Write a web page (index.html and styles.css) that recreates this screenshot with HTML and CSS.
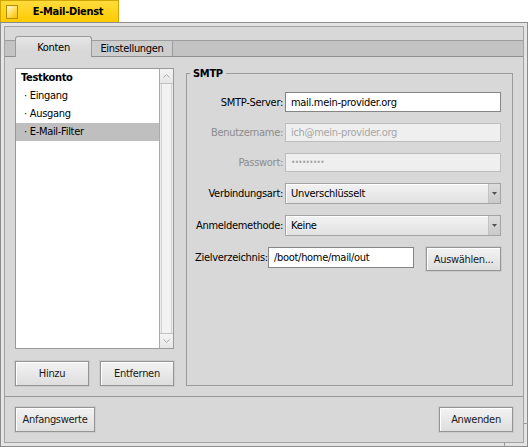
FILE: index.html
```html
<!DOCTYPE html>
<html lang="de">
<head>
    <meta charset="UTF-8">
    <meta name="viewport" content="width=device-width, initial-scale=1.0">
    <title>E-Mail-Dienst</title>
    <link rel="stylesheet" href="styles.css">
</head>
<body>
    <div class="title-tab">
        <span class="close-box"></span>
        <span class="title">E-Mail-Dienst</span>
    </div>

    <div class="window">
        <div class="window-inner">
            <div class="tab-bar">
                <div class="tab active">Konten</div>
                <div class="tab">Einstellungen</div>
            </div>

            <div class="tab-panel">
                <div class="accounts">
                    <div class="list-box">
                        <ul class="account-list">
                            <li class="account">Testkonto</li>
                            <li class="sub-item">· Eingang</li>
                            <li class="sub-item">· Ausgang</li>
                            <li class="sub-item selected">· E-Mail-Filter</li>
                        </ul>
                        <div class="scrollbar">
                            <div class="scroll-arrow up">
                                <svg width="7" height="4" viewBox="0 0 7 4"><polyline points="0.5,3.5 3.5,0.5 6.5,3.5" fill="none" stroke="#a9a9a9" stroke-width="1"/></svg>
                            </div>
                            <div class="scroll-track"></div>
                            <div class="scroll-arrow down">
                                <svg width="7" height="4" viewBox="0 0 7 4"><polyline points="0.5,0.5 3.5,3.5 6.5,0.5" fill="none" stroke="#a9a9a9" stroke-width="1"/></svg>
                            </div>
                        </div>
                    </div>
                    <div class="list-buttons">
                        <button class="btn">Hinzu</button>
                        <button class="btn">Entfernen</button>
                    </div>
                </div>

                <fieldset class="group">
                    <legend>SMTP</legend>
                    <div class="form-grid">
                        <label class="field-label">SMTP-Server:</label>
                        <input class="text-field" type="text" value="mail.mein-provider.org">

                        <label class="field-label disabled">Benutzername:</label>
                        <input class="text-field" type="text" value="ich@mein-provider.org" disabled>

                        <label class="field-label disabled">Passwort:</label>
                        <input class="text-field password" type="text" value="•••••••••" disabled>

                        <label class="field-label">Verbindungsart:</label>
                        <div class="menu-field">
                            <span class="menu-value">Unverschlüsselt</span>
                            <span class="menu-arrow">
                                <svg width="5" height="3" viewBox="0 0 5 3"><polygon points="0,0 5,0 2.5,3" fill="#505050"/></svg>
                            </span>
                        </div>

                        <label class="field-label">Anmeldemethode:</label>
                        <div class="menu-field">
                            <span class="menu-value">Keine</span>
                            <span class="menu-arrow">
                                <svg width="5" height="3" viewBox="0 0 5 3"><polygon points="0,0 5,0 2.5,3" fill="#505050"/></svg>
                            </span>
                        </div>
                    </div>

                    <div class="dir-row">
                        <label class="dir-label">Zielverzeichnis:</label>
                        <input class="text-field dir-field" type="text" value="/boot/home/mail/out">
                        <button class="btn choose">Auswählen...</button>
                    </div>
                </fieldset>
            </div>

            <div class="footer">
                <button class="btn defaults">Anfangswerte</button>
                <button class="btn apply">Anwenden</button>
            </div>
        </div>

        <span class="resize-tick tick-right"></span>
        <span class="resize-tick tick-bottom"></span>
    </div>
</body>
</html>
```

FILE: styles.css
```css
* {
    margin: 0;
    padding: 0;
    box-sizing: border-box;
}

body {
    width: 528px;
    height: 447px;
    overflow: hidden;
    background-color: #ffffff;
    font-family: "DejaVu Sans Condensed", "Liberation Sans", sans-serif;
    font-size: 11px;
    letter-spacing: -0.3px;
    color: #000;
}

/* window title tab */
.title-tab {
    width: 119px;
    height: 22px;
    display: flex;
    align-items: center;
    background: linear-gradient(#ffdc3c, #ffcb00);
    border: 1px solid #d2a600;
    border-bottom: none;
}

.close-box {
    width: 12px;
    height: 14px;
    margin-left: 5px;
    border: 1px solid #b38e00;
    background: linear-gradient(135deg, #fff9dc, #ffd84a 60%, #f2bf00);
}

.title {
    flex: 1;
    text-align: center;
    font-weight: bold;
}

/* window frame */
.window {
    position: relative;
    width: 528px;
    height: 425px;
    border: 1px solid #8c8c8c;
    background-color: #e4e4e4;
    padding: 3px;
}

.window-inner {
    height: 100%;
    display: flex;
    flex-direction: column;
    border: 1px solid #a2a2a2;
    background-color: #d8d8d8;
}

.resize-tick {
    position: absolute;
    background-color: #9a9a9a;
}

.tick-right {
    right: -1px;
    bottom: 22px;
    width: 5px;
    height: 1px;
}

.tick-bottom {
    right: 22px;
    bottom: -1px;
    width: 1px;
    height: 5px;
}

/* tabs */
.tab-bar {
    margin-top: 13px;
    height: 17px;
    display: flex;
    align-items: flex-end;
    padding-left: 10px;
    background-color: #c3c3c3;
    border-top: 1px solid #9c9c9c;
    border-bottom: 1px solid #8f8f8f;
}

.tab {
    height: 15px;
    width: 81px;
    display: flex;
    align-items: center;
    justify-content: center;
    background-color: #cdcdcd;
    border-right: 1px solid #9c9c9c;
}

.tab.active {
    width: 77px;
    height: 21px;
    margin-bottom: -1px;
    background: linear-gradient(#e6e6e6, #d8d8d8 70%);
    border: 1px solid #9a9a9a;
    border-bottom: none;
    border-radius: 3px 3px 0 0;
}

.tab-panel {
    flex: 1;
    display: flex;
    gap: 12px;
    padding: 11px 10px 10px 10px;
    border-bottom: 1px solid #989898;
}

/* account list */
.accounts {
    width: 159px;
    display: flex;
    flex-direction: column;
}

.list-box {
    flex: 1;
    display: flex;
    border: 1px solid #9a9a9a;
    background-color: #ffffff;
}

.account-list {
    flex: 1;
    list-style: none;
}

.account-list li {
    height: 18px;
    line-height: 18px;
    padding-left: 5px;
}

.account-list .account {
    font-weight: bold;
}

.account-list .sub-item {
    padding-left: 8px;
}

.account-list .selected {
    background-color: #bfbfbf;
}

.scrollbar {
    width: 14px;
    display: flex;
    flex-direction: column;
    border-left: 1px solid #ababab;
    background-color: #ececec;
}

.scroll-arrow {
    height: 15px;
    display: flex;
    align-items: center;
    justify-content: center;
    background: linear-gradient(#f4f4f4, #e6e6e6);
}

.scroll-arrow.up {
    border-bottom: 1px solid #c2c2c2;
}

.scroll-arrow.down {
    border-top: 1px solid #c2c2c2;
}

.scroll-track {
    flex: 1;
    margin: 0 1px;
    border-left: 1px solid #d4d4d4;
    border-right: 1px solid #d4d4d4;
    background-color: #f2f2f2;
}

.list-buttons {
    display: flex;
    justify-content: space-between;
    margin-top: 12px;
}

/* buttons */
.btn {
    height: 25px;
    width: 74px;
    font: inherit;
    letter-spacing: inherit;
    color: #1a1a1a;
    border: 1px solid #959595;
    background: linear-gradient(#f3f3f3, #dedede);
    box-shadow: inset 1px 1px #ffffff, 0 0 0 1px #cbcbcb;
}

/* SMTP group */
.group {
    flex: 1;
    min-width: 0;
    border: 1px solid #9b9b9b;
    padding: 13px 11px 10px 8px;
}

.group legend {
    margin-left: -5px;
    padding: 0 3px;
    line-height: 11px;
    font-weight: bold;
}

.form-grid {
    display: grid;
    grid-template-columns: 90px 216px;
    grid-template-rows: 20px 19px 19px 21px 21px;
    row-gap: 11px;
    align-items: stretch;
}

.field-label {
    align-self: center;
    text-align: right;
    padding-right: 2px;
    white-space: nowrap;
}

.field-label.disabled {
    color: #8c8c8c;
}

.text-field {
    width: 100%;
    height: 100%;
    padding: 0 5px;
    font: inherit;
    letter-spacing: inherit;
    color: #000;
    background-color: #ffffff;
    border: 1px solid #858585;
    outline: none;
}

.text-field:disabled {
    color: #a6a6a6;
    background-color: #efefef;
    border-color: #bdbdbd;
}

.text-field.password {
    font-size: 8px;
    letter-spacing: -0.6px;
}

.menu-field {
    display: flex;
    border: 1px solid #a3a3a3;
    background: linear-gradient(#f2f2f2, #e2e2e2);
    box-shadow: inset 1px 1px #ffffff;
}

.menu-value {
    flex: 1;
    display: flex;
    align-items: center;
    padding-left: 5px;
}

.menu-arrow {
    width: 12px;
    display: flex;
    align-items: center;
    justify-content: center;
    border-left: 1px solid #c4c4c4;
    background: linear-gradient(#dcdcdc, #cacaca);
}

.dir-row {
    display: flex;
    align-items: flex-start;
    margin-top: 11px;
}

.dir-label {
    width: 73px;
    line-height: 21px;
    white-space: nowrap;
}

.dir-field {
    width: 146px;
    height: 21px;
}

.btn.choose {
    width: 75px;
    height: 24px;
    margin-left: 12px;
}

/* bottom buttons */
.footer {
    height: 45px;
    display: flex;
    justify-content: space-between;
    align-items: flex-start;
    padding: 10px 10px 0 10px;
}

.btn.defaults {
    width: 80px;
}
```
